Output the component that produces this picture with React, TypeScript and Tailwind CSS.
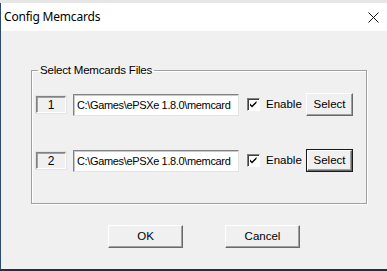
import React from 'react';

const ui = { fontFamily: '"Liberation Sans", Arial, sans-serif' };

function RaisedButton({ label, width, isDefault }: { label: string; width: string; isDefault?: boolean }) {
  return (
    <div className={`${width} h-[23px] ${isDefault ? 'border border-[#1a1a1a]' : ''}`}>
      <div className="h-full w-full border border-t-white border-l-white border-b-[#696969] border-r-[#696969] shadow-[inset_-1px_-1px_0_#a0a0a0] bg-[#f0f0f0] flex items-center justify-center text-[11.5px] text-black">
        {label}
      </div>
    </div>
  );
}

function CheckBox() {
  return (
    <div className="w-[13px] h-[13px] border border-t-[#808080] border-l-[#808080] border-b-white border-r-white shadow-[inset_1px_1px_0_#404040] bg-white flex items-center justify-center">
      <svg width="9" height="9" viewBox="0 0 9 9">
        <path d="M1 3.5 L3 5.5 L7.5 1 L7.5 3 L3 7.5 L1 5.5 Z" fill="#000" />
      </svg>
    </div>
  );
}

function MemcardRow({ n }: { n: string }) {
  return (
    <div className="flex items-center h-[23px]">
      <div className="ml-[4px] w-[30px] h-[17px] border border-t-[#808080] border-l-[#808080] border-b-white border-r-white shadow-[inset_1px_1px_0_#a0a0a0,0_0_0_1px_#e3e3e3] flex items-center justify-center text-[12px] pt-[1px]">
        {n}
      </div>
      <div className="ml-[7px] w-[166px] h-[22px] border border-t-[#828282] border-l-[#828282] border-b-[#e3e3e3] border-r-[#e3e3e3] shadow-[inset_1px_1px_0_#c8c8c8] bg-white flex items-center pl-[3px] text-[11px] tracking-[-0.35px] whitespace-nowrap overflow-hidden">
        C:\Games\ePSXe 1.8.0\memcard
      </div>
      <div className="ml-[8px]">
        <CheckBox />
      </div>
      <span className="ml-[6px] text-[11.5px]">Enable</span>
      <div className="ml-auto mr-[13px]">
        <RaisedButton label="Select" width="w-[47px]" isDefault={n === '2'} />
      </div>
    </div>
  );
}

export default function App() {
  return (
    <div className="w-[387px] h-[271px] bg-[#dcdcdc] flex flex-col overflow-hidden" style={ui}>
      <div className="h-[3px] bg-[#e6e6e6] shrink-0" />
      <div className="flex-1 flex flex-col border-l border-l-[#2b4a6f] border-b-2 border-b-[#1f2f44]">
        <div className="h-[28px] bg-white flex items-center justify-between shrink-0">
          <span className="ml-[3px] text-[12px] tracking-[-0.2px] text-black" style={{ fontFamily: '"Noto Sans", "Open Sans", sans-serif' }}>
            Config Memcards
          </span>
          <svg className="mr-[8px]" width="11" height="11" viewBox="0 0 11 11">
            <path d="M0.5 0.5 L10.5 10.5 M10.5 0.5 L0.5 10.5" stroke="#111" strokeWidth="1" />
          </svg>
        </div>
        <div className="flex-1 bg-[#f0f0f0] flex flex-col">
          <fieldset className="ml-[30px] mt-[31px] w-[336px] h-[142px] border border-[#a0a0a0] shadow-[inset_1px_1px_0_white,1px_1px_0_white] px-0 pt-[14px]">
            <legend className="ml-[6px] px-[2px] text-[11.5px] tracking-[-0.2px] text-black">Select Memcards Files</legend>
            <div className="flex flex-col gap-[33px]">
              <MemcardRow n="1" />
              <MemcardRow n="2" />
            </div>
          </fieldset>
          <div className="flex mt-[21px] ml-[107px] gap-[42px]">
            <RaisedButton label="OK" width="w-[75px]" />
            <RaisedButton label="Cancel" width="w-[75px]" />
          </div>
        </div>
      </div>
    </div>
  );
}
